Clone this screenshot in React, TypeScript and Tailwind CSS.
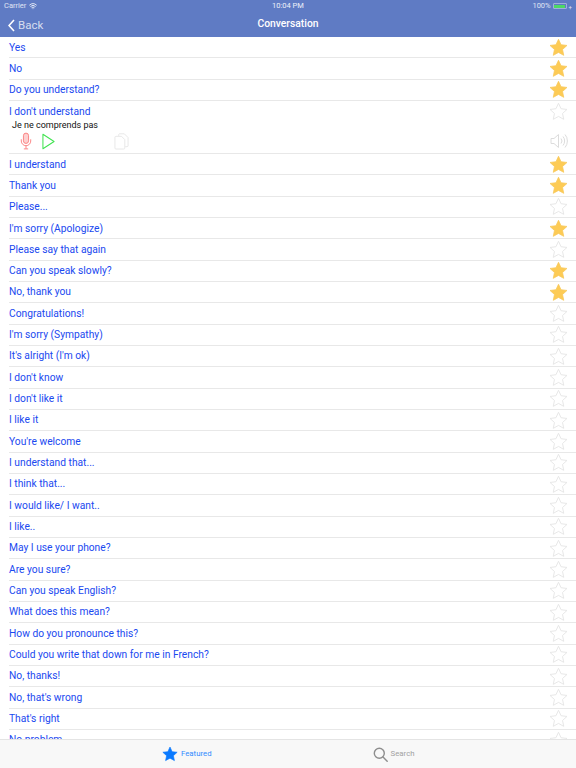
import { Wifi } from 'lucide-react'

const rows: { text: string; on?: boolean; open?: boolean }[] = [
  { text: 'Yes', on: true },
  { text: 'No', on: true },
  { text: 'Do you understand?', on: true },
  { text: "I don't understand", open: true },
  { text: 'I understand', on: true },
  { text: 'Thank you', on: true },
  { text: 'Please...' },
  { text: "I'm sorry (Apologize)", on: true },
  { text: 'Please say that again' },
  { text: 'Can you speak slowly?', on: true },
  { text: 'No, thank you', on: true },
  { text: 'Congratulations!' },
  { text: "I'm sorry (Sympathy)" },
  { text: "It's alright (I'm ok)" },
  { text: "I don't know" },
  { text: "I don't like it" },
  { text: 'I like it' },
  { text: "You're welcome" },
  { text: 'I understand that...' },
  { text: 'I think that...' },
  { text: 'I would like/ I want..' },
  { text: 'I like..' },
  { text: 'May I use your phone?' },
  { text: 'Are you sure?' },
  { text: 'Can you speak English?' },
  { text: 'What does this mean?' },
  { text: 'How do you pronounce this?' },
  { text: 'Could you write that down for me in French?' },
  { text: 'No, thanks!' },
  { text: "No, that's wrong" },
  { text: "That's right" },
  { text: 'No problem' },
]

const starPath = 'M12 1.6l3.2 6.9 7.5.9-5.6 5.1 1.5 7.4L12 18.2l-6.6 3.7 1.5-7.4-5.6-5.1 7.5-.9z'

function Star({ on }: { on?: boolean }) {
  return (
    <svg className="w-[19px] h-[19px] mt-[-1px]" viewBox="0 0 24 24">
      <path
        d={starPath}
        fill={on ? '#fdcb55' : 'none'}
        stroke={on ? '#f8c95c' : '#e6e6e6'}
        strokeWidth={on ? 1 : 1.2}
        strokeLinejoin="round"
      />
    </svg>
  )
}

function Mic() {
  return (
    <svg className="w-[12px] h-[18px]" viewBox="0 0 14 20" fill="none" stroke="#fb8080" strokeWidth="1.1">
      <rect x="4" y="0.8" width="6" height="12" rx="3" fill="#fdd0d0" />
      <path d="M1.5 8v2a5.500 5.500 0 0 0 11 0V8M7 15.500v3.500M4.500 19.200h5" />
    </svg>
  )
}

function Play() {
  return (
    <svg className="w-[13px] h-[17px]" viewBox="0 0 14 18" fill="none" stroke="#3fe34f" strokeWidth="1.1">
      <path d="M1 1.200v15.600L13 9z" strokeLinejoin="round" />
    </svg>
  )
}

function Copy() {
  return (
    <svg className="w-[15px] h-[17px]" viewBox="0 0 16 18" fill="none" stroke="#e6e6e6" strokeWidth="1">
      <path d="M5 3V1.500A1 1 0 0 1 6 .8h5l4 4v8.700a1 1 0 0 1-1 1h-2" />
      <path d="M2 3.500h6l3.500 3.500v9a1 1 0 0 1-1 1H2a1 1 0 0 1-1-1V4.500a1 1 0 0 1 1-1z" />
    </svg>
  )
}

function Speaker() {
  return (
    <svg className="w-[18px] h-[16px]" viewBox="0 0 18 16" fill="none" stroke="#dcdcdc" strokeWidth="1">
      <path d="M1 5.500h3L8.500 1.500v13L4 10.500H1z" strokeLinejoin="round" />
      <path d="M11 5.500a4 4 0 0 1 0 5M13 3.500a7 7 0 0 1 0 9M15 1.500a10 10 0 0 1 0 13" />
    </svg>
  )
}

export default function App() {
  return (
    <div className="h-screen flex flex-col overflow-hidden bg-white font-['Roboto',sans-serif]">
      {/* status + nav */}
      <header className="bg-[#5f7bc4] h-[37px] shrink-0 text-white">
        <div className="flex items-center justify-between h-[12px] px-[4px] text-[7.500px] text-white/80">
          <div className="flex items-center gap-[3px] w-[100px]">
            <span>Carrier</span>
            <Wifi className="w-[8px] h-[8px]" strokeWidth={3} />
          </div>
          <span className="text-white/90">10:04 PM</span>
          <div className="flex items-center justify-end gap-[2px] w-[100px]">
            <span>100%</span>
            <div className="w-[14px] h-[6px] rounded-[1px] border border-white/40 p-[0.5px]">
              <div className="h-full bg-[#4cd964]" />
            </div>
            <span className="text-[6px]">+</span>
          </div>
        </div>
        <div className="relative flex items-center justify-center h-[24px]">
          <div className="absolute left-[8px] top-[5px] flex items-center gap-[3px] text-white/75">
            <svg className="w-[7px] h-[13px]" viewBox="0 0 7 13" fill="none" stroke="white" strokeWidth="1.6">
              <path d="M6 1L1 6.500l5 5.500" />
            </svg>
            <span className="text-[11.500px]">Back</span>
          </div>
          <h1 className="text-[10.300px] font-medium">Conversation</h1>
        </div>
      </header>

      {/* phrase list */}
      <div className="flex-1 overflow-hidden">
        {rows.map((row) => (
          <div key={row.text} className={`ml-[9px] border-b border-[#e8e8e8] ${row.open ? 'h-[53px]' : 'h-[21.33px]'}`}>
            <div className="flex items-center justify-between h-[21.33px] pr-[8.500px]">
              <span className="text-[10.250px] text-[#1a49f0] leading-none">{row.text}</span>
              <Star on={row.on} />
            </div>
            {row.open && (
              <div>
                <p className="pl-[3px] text-[9px] leading-[10px] text-[#111] mt-[-2px]">Je ne comprends pas</p>
                <div className="flex items-center h-[20px] pr-[8px] mt-[1px]">
                  <div className="ml-[11px]"><Mic /></div>
                  <div className="ml-[10px]"><Play /></div>
                  <div className="ml-[59px]"><Copy /></div>
                  <div className="ml-auto"><Speaker /></div>
                </div>
              </div>
            )}
          </div>
        ))}
      </div>

      {/* tab bar */}
      <nav className="relative z-10 h-[29px] shrink-0 bg-[#f8f8f8] border-t border-[#e4e4e4] flex items-center">
        <div className="flex items-center gap-[3px] ml-[162px]">
          <svg className="w-[16px] h-[16px]" viewBox="0 0 24 24">
            <path d={starPath} fill="#0a7aff" stroke="#0a7aff" strokeLinejoin="round" />
          </svg>
          <span className="text-[7.800px] text-[#2f8bff]">Featured</span>
        </div>
        <div className="flex items-center gap-[3px] ml-[161px]">
          <svg className="w-[15px] h-[15px]" viewBox="0 0 15 15" fill="none" stroke="#8e8e8e" strokeWidth="1.400">
            <circle cx="6.300" cy="6.300" r="5" />
            <path d="M10 10l4.200 4.200" strokeLinecap="round" />
          </svg>
          <span className="text-[7.800px] text-[#a2a2a2]">Search</span>
        </div>
      </nav>
    </div>
  )
}
